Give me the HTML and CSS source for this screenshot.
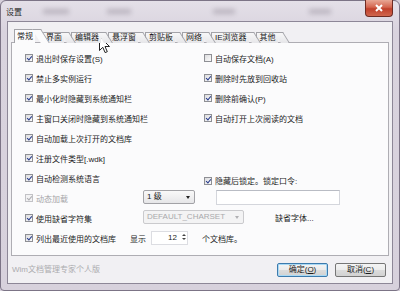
FILE: index.html
```html
<!DOCTYPE html>
<html lang="zh-CN">
<head>
    <meta charset="UTF-8">
    <title>设置</title>
    <link rel="stylesheet" href="styles.css">
</head>
<body>
    <div class="window">
        <div class="titlebar">
            <span class="title">设置</span>
            <span class="haze h1"></span>
            <span class="haze h2"></span>
            <span class="haze h3"></span>
            <span class="haze h4"></span>
            <div class="close">
                <svg width="10" height="8" viewBox="0 0 10 8"><path d="M2 1 L8 7 M8 1 L2 7" stroke="#fff" stroke-width="2"/></svg>
            </div>
        </div>
        <div class="client">
            <div class="tabs">
                <span class="tab active">常规</span>
                <span class="tab">界面</span>
                <span class="tab">编辑器</span>
                <span class="tab">悬浮窗</span>
                <span class="tab">剪贴板</span>
                <span class="tab">网络</span>
                <span class="tab">IE浏览器</span>
                <span class="tab">其他</span>
            </div>
            <div class="panel">
                <div class="row">
                    <label class="opt wide"><span class="cb on"></span>退出时保存设置(S)</label>
                    <label class="opt"><span class="cb"></span>自动保存文档(A)</label>
                </div>
                <div class="row">
                    <label class="opt wide"><span class="cb on"></span>禁止多实例运行</label>
                    <label class="opt"><span class="cb on"></span>删除时先放到回收站</label>
                </div>
                <div class="row">
                    <label class="opt wide"><span class="cb on"></span>最小化时隐藏到系统通知栏</label>
                    <label class="opt"><span class="cb on"></span>删除前确认(P)</label>
                </div>
                <div class="row">
                    <label class="opt wide"><span class="cb on"></span>主窗口关闭时隐藏到系统通知栏</label>
                    <label class="opt"><span class="cb on"></span>自动打开上次阅读的文档</label>
                </div>
                <div class="row">
                    <label class="opt wide"><span class="cb on"></span>自动加载上次打开的文档库</label>
                </div>
                <div class="row">
                    <label class="opt wide"><span class="cb on"></span>注册文件类型[.wdk]</label>
                </div>
                <div class="row">
                    <label class="opt wide"><span class="cb on"></span>自动检测系统语言</label>
                    <label class="opt lock"><span class="cb on"></span>隐藏后锁定。锁定口令:</label>
                </div>
                <div class="row">
                    <label class="opt narrow disabled"><span class="cb on"></span>动态加载</label>
                    <div class="combo level">1 级<span class="arrow"></span></div>
                    <div class="textbox"></div>
                </div>
                <div class="row">
                    <label class="opt narrow"><span class="cb on"></span>使用缺省字符集</label>
                    <div class="combo charset disabled">DEFAULT_CHARSET<span class="arrow"></span></div>
                    <span class="font-link">缺省字体...</span>
                </div>
                <div class="row">
                    <label class="opt recent"><span class="cb on"></span>列出最近使用的文档库</label>
                    <span>显示</span>
                    <div class="spin">12<span class="spin-btns"><span class="up"></span><span class="down"></span></span></div>
                    <span class="count-text">个文档库。</span>
                </div>
            </div>
            <div class="footer">
                <span class="edition">Wim文档管理专家个人版</span>
                <button class="btn default">确定(<u>O</u>)</button>
                <button class="btn">取消(<u>C</u>)</button>
            </div>
        </div>
    </div>

    <svg class="cursor" width="12" height="18" viewBox="0 0 12 18">
        <path d="M0.5 0.5 L0.5 14.5 L3.8 11.3 L6.1 16.6 L8.3 15.7 L6 10.5 L10.5 10.5 Z" fill="#fff" stroke="#222" stroke-width="1"/>
    </svg>
</body>
</html>
```

FILE: styles.css
```css
body {
    margin: 0;
    width: 400px;
    height: 291px;
    overflow: hidden;
    background: #d6d0db;
    font-family: 'Liberation Sans', 'Noto Sans CJK SC', sans-serif;
    font-size: 8px;
    color: #1c1c1c;
    position: relative;
}
.window {
    height: 291px;
    box-sizing: border-box;
    border: 1px solid #7c7486;
    border-radius: 6px 6px 4px 4px;
    background: linear-gradient(#e4e0e8, #d9d3de 30px, #d7d1dc);
    display: flex;
    flex-direction: column;
}
.titlebar {
    height: 20px;
    position: relative;
    display: flex;
    align-items: center;
    padding-left: 5px;
}
.title {
    color: #2a2a2a;
    position: relative;
    z-index: 1;
}
.haze {
    position: absolute;
    top: 8px;
    height: 5px;
    background: #8c8592;
    filter: blur(2.5px);
    opacity: 0.45;
}
.h1 { left: 42px; width: 26px; }
.h2 { left: 106px; width: 24px; }
.h3 { left: 212px; width: 22px; }
.h4 { left: 308px; width: 22px; }
.close {
    position: absolute;
    top: -1px;
    right: 6px;
    width: 28px;
    height: 17px;
    box-sizing: border-box;
    border: 1px solid #6e2b22;
    border-top: none;
    border-radius: 0 0 4px 4px;
    background: linear-gradient(#e8a795, #d4654f 45%, #c0402b 55%, #d0664e);
    display: flex;
    align-items: center;
    justify-content: center;
}
.client {
    flex: 1;
    margin: 0 6px 6px;
    border: 1px solid #8d8797;
    background: #f1f0f3;
    padding: 8px 3px 0 3px;
    display: flex;
    flex-direction: column;
}
.tabs {
    display: flex;
    align-items: flex-end;
    padding-left: 3px;
    height: 13px;
    margin-bottom: -1px;
    position: relative;
    z-index: 2;
}
.tab {
    position: relative;
    height: 11px;
    box-sizing: border-box;
    padding: 0 2px 0 3px;
    margin-right: 7px;
    line-height: 10px;
    border: 1px solid #a3a3a8;
    border-right: none;
    border-bottom: none;
    background: linear-gradient(#f7f7f8, #e6e6e9);
}
.tab::after {
    content: "";
    position: absolute;
    top: -1px;
    bottom: 0;
    right: -5px;
    width: 8px;
    border-top: 1px solid #a3a3a8;
    border-right: 1px solid #a3a3a8;
    background: linear-gradient(#f7f7f8, #e6e6e9);
    transform: skewX(32deg);
    transform-origin: top;
}
.tab:nth-child(1) { z-index: 9; }
.tab:nth-child(2) { z-index: 8; }
.tab:nth-child(3) { z-index: 7; }
.tab:nth-child(4) { z-index: 6; }
.tab:nth-child(5) { z-index: 5; }
.tab:nth-child(6) { z-index: 4; }
.tab:nth-child(7) { z-index: 3; }
.tab:nth-child(8) { z-index: 2; }
.tab.active {
    height: 14px;
    padding-left: 2px;
    line-height: 13px;
    z-index: 10;
    background: #fbfbfc;
}
.tab.active::after {
    background: #fbfbfc;
    right: -6px;
}
.panel {
    height: 214px;
    box-sizing: border-box;
    border: 1px solid #aeadb3;
    background: #fbfbfc;
    padding: 5px 0 0 13px;
}
.row {
    height: 20px;
    display: flex;
    align-items: center;
    white-space: nowrap;
}
.opt {
    display: flex;
    align-items: center;
}
.wide { width: 179px; }
.narrow { width: 118px; }
.recent { width: 105px; }
.lock { margin-top: 5px; }
.disabled { color: #a5a5a8; }
.cb {
    position: relative;
    width: 8px;
    height: 8px;
    box-sizing: border-box;
    margin-right: 3px;
    border: 1px solid #8e8f94;
    background: linear-gradient(135deg, #dcdcde, #fbfbfb);
}
.cb.on::after {
    content: "";
    position: absolute;
    left: 2px;
    top: 0;
    width: 1.5px;
    height: 4px;
    border: solid #23378a;
    border-width: 0 1.5px 1.5px 0;
    transform: rotate(40deg);
}
.disabled .cb {
    border-color: #c2c2c6;
    background: #f3f3f4;
}
.disabled .cb.on::after {
    border-color: #a9a9ae;
}
.combo {
    position: relative;
    height: 14px;
    box-sizing: border-box;
    border: 1px solid #a2a2a6;
    border-radius: 2px;
    background: linear-gradient(#f9f9f9, #e6e6e8);
    padding-left: 3px;
    line-height: 12px;
    margin-top: -7px;
}
.combo.level {
    width: 52px;
    margin-top: -3px;
}
.combo.charset {
    width: 101px;
    margin-top: -2px;
    background: #f3f3f4;
    border-color: #cacacd;
    color: #a9a9ac;
}
.arrow {
    position: absolute;
    right: 4px;
    top: 5px;
    border-left: 2.5px solid transparent;
    border-right: 2.5px solid transparent;
    border-top: 3px solid #222;
}
.combo.disabled .arrow {
    border-top-color: #b0b0b3;
}
.textbox {
    width: 124px;
    height: 15px;
    box-sizing: border-box;
    margin-left: 21px;
    margin-top: -2px;
    border: 1px solid #d4d6dc;
    border-top-color: #b9bcc4;
    background: #fff;
}
.font-link {
    margin-left: 31px;
    margin-top: -2px;
}
.spin {
    position: relative;
    width: 37px;
    height: 14px;
    box-sizing: border-box;
    margin-left: 5px;
    border: 1px solid #dcdde2;
    background: #fff;
    padding-right: 10px;
    text-align: right;
    line-height: 12px;
}
.spin-btns {
    position: absolute;
    right: 1px;
    top: 2px;
    display: flex;
    flex-direction: column;
    gap: 2px;
}
.up {
    border-left: 2px solid transparent;
    border-right: 2px solid transparent;
    border-bottom: 2.5px solid #444;
}
.down {
    border-left: 2px solid transparent;
    border-right: 2px solid transparent;
    border-top: 2.5px solid #444;
}
.count-text {
    margin-left: 14px;
}
.footer {
    flex: 1;
    display: flex;
    align-items: center;
    padding: 0 3px 0 1px;
}
.edition {
    color: #ababae;
    flex: 1;
    margin-top: -3px;
}
.btn {
    width: 51px;
    height: 14px;
    box-sizing: border-box;
    margin-left: 7px;
    padding: 0;
    font: inherit;
    color: #1c1c1c;
    line-height: 12px;
    border: 1px solid #767676;
    border-radius: 2px;
    background: linear-gradient(#f4f4f4, #ebebeb 50%, #dcdcdc 51%, #d2d2d2);
}
.btn u {
    text-decoration: underline;
}
.btn.default {
    border-color: #3d7bad;
    box-shadow: inset 0 0 0 1px #a9d9f5;
}
.cursor {
    position: absolute;
    left: 99px;
    top: 36px;
}
```
